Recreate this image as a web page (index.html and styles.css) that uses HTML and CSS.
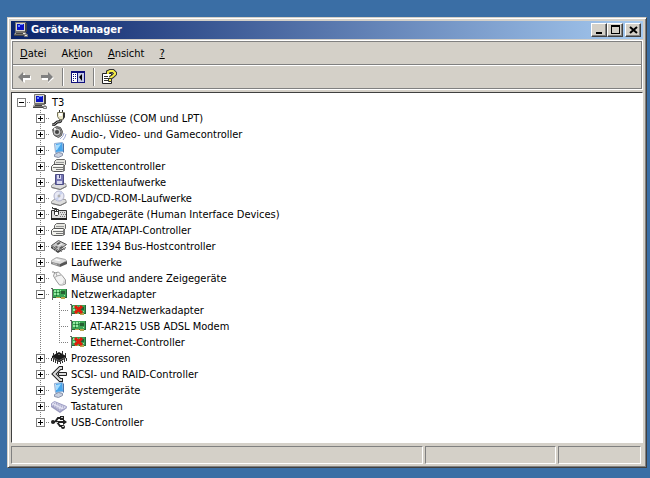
FILE: index.html
```
<!DOCTYPE html>
<html lang="de">
<head>
	<meta charset="UTF-8">
	<title>Geräte-Manager</title>
	<link rel="stylesheet" href="styles.css">
</head>
<body>

<!-- icon sprites, all on a 16x16 grid -->
<svg class="sprites" width="0" height="0">
	<symbol id="pc" viewBox="0 0 16 16">
		<path fill="#d8d6d0" stroke="#77756f" d="M2.500.5h10v9h-10z"/>
		<path fill="#444" d="M12 1h2v9h-2z"/>
		<path fill="#0a12c4" d="M4 2h7v6H4z"/>
		<path fill="#6c8cff" d="M7 2h3v1H7zM5 3h2v2H5z"/>
		<path fill="#e8e6e0" stroke="#77756f" d="M2.500 10.500h10l1 2h-12z"/>
		<path fill="#444" d="M3 11h7v1H3zM1 13h11v1H1z"/>
		<path fill="#e4e4e4" stroke="#777" d="M11.500 12.500h3v2h-3z"/>
	</symbol>
	<symbol id="port" viewBox="0 0 16 16">
		<path fill="none" stroke="#222" stroke-width="3" d="M10 9c0 5-3 1-5 4-1 1-2 2-4 2"/>
		<path fill="none" stroke="#bbb" d="M10 9c0 5-3 1-5 4-1 1-2 2-4 2"/>
		<path fill="#ece8c8" stroke="#77745c" d="M6.500 2.500h7v4l-2 3h-3l-2-3z"/>
		<path fill="#333" d="M12 3h2v4l-2 3zM8 0h1v2H8zM11 0h1v2h-1z"/>
		<path fill="#fff" d="M8 3h3v3H8z"/>
	</symbol>
	<symbol id="audio" viewBox="0 0 16 16">
		<path fill="#999" stroke="#555" d="M1.500 3.500l4-3 4 1 2 4-1 4-3 2-4-2z"/>
		<circle cx="6" cy="6" r="4" fill="#c4c4c4" stroke="#666"/>
		<circle cx="6" cy="6" r="2" fill="#444"/>
		<path fill="#eee" d="M3 2h2v2H3z"/>
		<path fill="none" stroke="#a4acd4" d="M9 13l3-3 1-3M12 14l2-3 1-3"/>
	</symbol>
	<symbol id="monitor" viewBox="0 0 16 16">
		<path fill="#cfdff2" stroke="#8cacd4" d="M3.500 1.500l8-1 1 9-8 1z"/>
		<path fill="#46a5ec" d="M5 2l6-1 1 8-7 1z"/>
		<path fill="#a5dcff" d="M5 3l5-1-4 6H5z"/>
		<path fill="#4d76aa" d="M12 1l1 1v9l-1-1z"/>
		<path fill="#c8d0e0" stroke="#8791a9" d="M3.500 12.500l4-2 4 1v2l-4 2-4-1z"/>
	</symbol>
	<symbol id="controller" viewBox="0 0 16 16">
		<path fill="#e6e6e0" stroke="#666" d="M3.500 3.500l2-2h8l1 1v4l-2 2h-9z"/>
		<path fill="#999" d="M5 4h8v1H5z"/>
		<path fill="#f0f0ea" stroke="#555" d="M.5 8.500l2-2h10l1 2v4l-2 1h-9l-2-1z"/>
		<path fill="#777" d="M2 9h10v1H2zM5 11h7v1H5zM12 8h2v5h-2z"/>
		<path fill="#fff" d="M3 7h9v1H3z"/>
	</symbol>
	<symbol id="floppy" viewBox="0 0 16 16">
		<path fill="#ddd" stroke="#999" d="M.5 11.500l4-3 10 1 1 3-6 3-9-2z"/>
		<path fill="#777" d="M1 13l8 2v1l-8-2zM9 15l6-3v1l-6 3z"/>
		<path fill="#7777b4" stroke="#4d4d85" d="M4.500.5h8v10h-8z"/>
		<path fill="#d8d8f0" d="M6 1h4v4H6zM6 7h5v3H6z"/>
		<path fill="#44447c" d="M8 1h1v3H8z"/>
	</symbol>
	<symbol id="cd" viewBox="0 0 16 16">
		<path fill="#ddd" stroke="#999" d="M.5 11.500l4-3 10 1 1 3-6 3-9-2z"/>
		<path fill="#777" d="M1 13l8 2v1l-8-2zM9 15l6-3v1l-6 3z"/>
		<circle cx="8" cy="6" r="5" fill="#e8e9f4" stroke="#b0b2cb"/>
		<path fill="#c9d2ee" d="M8 6l1-5 3 2zM8 6L4 9l3 2z"/>
		<circle cx="8" cy="6" r="1" fill="#fff" stroke="#999"/>
	</symbol>
	<symbol id="hid" viewBox="0 0 16 16">
		<path fill="#ddd" stroke="#333" d="M.5 4.500h15v8H.5z"/>
		<path fill="#777" d="M9 6h1v1H9zM11 6h1v1h-1zM13 6h1v1h-1zM10 8h1v1h-1zM12 8h1v1h-1zM14 8h1v1h-1zM9 10h1v1H9zM11 10h1v1h-1zM13 10h1v1h-1z"/>
		<path fill="#fff" stroke="#333" d="M3.500 3.500h4v5l-1 1h-2l-1-1z"/>
		<path fill="none" stroke="#333" d="M5.500 6V2.500h-4V1M3 5.500h5"/>
		<path fill="#222" d="M0 12h16v2H0z"/>
	</symbol>
	<symbol id="ieee" viewBox="0 0 16 16">
		<path fill="#444" d="M0 8l7 5 8-4v1l-8 5-7-5z"/>
		<path fill="#c4c4c4" stroke="#555" d="M.5 7.500l7-5 8 4-8 6z"/>
		<path fill="#eee" d="M4 6l4-2 4 2-4 2z"/>
		<path fill="#555" d="M5 8l2 1-1 1-2-1zM11 8l1 1-3 2-1-1zM8 4l2 1-3 2-2-1z"/>
		<path fill="#888" d="M2 10h1v2H2zM4 11h1v2H4zM10 12h1v2h-1zM13 10h1v2h-1z"/>
	</symbol>
	<symbol id="drive" viewBox="0 0 16 16">
		<path fill="#ddd" stroke="#aaa" d="M.5 6.500l5-3 9 2 1 1-6 4-9-2z"/>
		<path fill="#888" d="M0 8l9 2v3l-9-3z"/>
		<path fill="#555" d="M9 10l7-3v3l-7 3z"/>
		<path fill="#bbb" d="M2 9l4 1v1l-4-1z"/>
		<path fill="#fff" d="M5 5l5 1-2 1-5-1z"/>
	</symbol>
	<symbol id="mouse" viewBox="0 0 16 16">
		<path fill="none" stroke="#888" d="M5 4L3 2 1 2"/>
		<path fill="#f3f3f3" stroke="#999" d="M2.500 6l1-3 4-1 4 4 3 4v4l-3 1h-3l-3-4z"/>
		<path fill="none" stroke="#aaa" d="M3 8l3-2 4-1M6 6L5 3"/>
		<path fill="#ccc" d="M13 9l1 4-3 2H9l3-2z"/>
	</symbol>
	<symbol id="net" viewBox="0 0 16 16">
		<path fill="#3ba454" d="M2 3h14v8H2z"/>
		<path fill="#26653a" d="M2 11h14v1H2zM15 3h1v9h-1zM2 4h1v1H2z"/>
		<path fill="#666" d="M0 2h2v1H0zM1 3h1v11H1z"/>
		<path fill="#96e8a2" d="M3 4h2v2H3zM6 4h2v2H6zM3 7h2v2H3zM6 7h2v2H6zM9 4h1v1H9zM13 9h1v1h-1z"/>
		<path fill="#275f32" d="M10 5h4v3h-4zM5 6h1v1H5zM8 6h1v1H8zM5 9h1v1H5z"/>
		<path fill="#b6a54e" d="M5 11h4v1H5zM10 11h4v2h-4z"/>
	</symbol>
	<symbol id="neterr" viewBox="0 0 16 16">
		<use href="#net" width="16" height="16"/>
		<path fill="none" stroke="#e01c0c" stroke-width="3" d="M5 4l7 7M12 4l-7 7"/>
	</symbol>
	<symbol id="cpu" viewBox="0 0 16 16">
		<path fill="#1a1a1a" d="M1 6l7-4 7 4v2l-6 4H8L1 8z"/>
		<path fill="#333" d="M0 8h1v3H0zM2 9h1v3H2zM4 10h1v3H4zM6 11h1v3H6zM9 12h1v2H9zM11 11h1v2h-1zM13 9h1v3h-1zM15 8h1v3h-1zM2 3h1v3H2zM5 1h1v3H5zM11 1h1v3h-1zM14 3h1v3h-1z"/>
		<path fill="#666" d="M7 4h2v1H7zM2 7l6 3 6-3v1l-6 3-6-3z"/>
	</symbol>
	<symbol id="scsi" viewBox="0 0 16 16">
		<path fill="none" stroke="#222" stroke-width="4" d="M12 2H9L3 8l6 6h3"/>
		<path fill="none" stroke="#ddd" stroke-width="2" d="M11 2H9L3 8l6 6h2"/>
		<path fill="#ddd" stroke="#222" d="M7.500 6.500h8v3h-8z"/>
	</symbol>
	<symbol id="keyboard" viewBox="0 0 16 16">
		<path fill="#9c9cc0" d="M0 7l9 6 7-4v1l-7 5-9-6z"/>
		<path fill="#e2e2f2" stroke="#9c9cc4" d="M.5 5.500l3-2 12 5-1 2-5 2-9-5z"/>
		<path fill="none" stroke="#9494bc" stroke-dasharray="1 1" d="M3 5l10 5M2 7l9 5M5 5l9 4"/>
	</symbol>
	<symbol id="usb" viewBox="0 0 16 16">
		<path fill="none" stroke="#222" stroke-width="2" d="M2 8h12M4 8l3-4h3M6 8l3 4h3"/>
		<circle cx="2" cy="8" r="2" fill="#222"/>
		<path fill="#222" d="M12 5l4 3-4 3zM9 2h4v4H9z"/>
		<circle cx="12" cy="13" r="2" fill="#222"/>
		<path fill="#ccc" d="M10 3h2v1h-2zM4 8h3v1H4zM11 12h2v1h-2z"/>
	</symbol>
</svg>

<main class="window">
	<header class="title-bar">
		<svg class="icon"><use href="#pc"/></svg>
		<h1>Geräte-Manager</h1>
		<div class="controls">
			<button aria-label="Minimieren"><svg width="12" height="10"><path d="M3 7h6v2H3z"/></svg></button>
			<button aria-label="Maximieren"><svg width="12" height="10"><path fill-rule="evenodd" d="M2 0h9v9H2zM3 2v6h7V2z"/></svg></button>
			<button class="close" aria-label="Schließen"><svg width="12" height="10"><path fill="none" stroke="#000" stroke-width="2" d="M3 2l7 6M10 2L3 8"/></svg></button>
		</div>
	</header>

	<div class="bars">
		<nav class="menu">
			<button><u>D</u>atei</button>
			<button>Ak<u>t</u>ion</button>
			<button><u>A</u>nsicht</button>
			<button><u>?</u></button>
		</nav>
		<div class="toolbar">
			<button aria-label="Zurück"><svg class="icon"><path fill="#fff" d="M3 9l6-5v3h6v4H9v3z"/><path fill="#808080" d="M2 8l5-5v3h7v3H7v4z"/></svg></button>
			<button aria-label="Vorwärts"><svg class="icon"><path fill="#fff" d="M15 9L9 4v3H3v4h6v3z"/><path fill="#808080" d="M14 8L9 3v3H2v3h7v4z"/></svg></button>
			<span class="separator"></span>
			<button aria-label="Konsolenstruktur"><svg class="icon">
				<path fill="#10107c" d="M1 2h14v12H1z"/>
				<path fill="#fff" d="M2 4h5v9H2z"/>
				<path fill="#c4c8e8" d="M8 4h6v9H8z"/>
				<path fill="#10107c" d="M3 5h1v1H3zM5 5h1v1H5zM3 7h1v1H3zM5 7h1v1H5zM3 9h1v1H3zM5 9h1v1H5zM3 11h1v1H3z"/>
				<path d="M12 5v7L9 8z"/>
			</svg></button>
			<span class="separator"></span>
			<button aria-label="Eigenschaften"><svg class="icon">
				<path fill="#fff" stroke="#222" d="M1.500 4.500h9v10h-9z"/>
				<path fill="#333" d="M3 7h4v1H3zM3 9h6v1H3zM3 11h6v1H3z"/>
				<path fill="none" stroke="#333" stroke-width="4" d="M7 5V3l2-1h3l2 2v1l-2 2-3 2"/>
				<path fill="none" stroke="#f5ec48" stroke-width="2" d="M7 5V3l2-1h3l2 2v1l-2 2-3 2"/>
				<path fill="#f5ec48" stroke="#333" d="M7.500 9.500h3v3h-3z"/>
			</svg></button>
		</div>
	</div>

	<section class="tree">
		<ul class="root">
			<li>
				<div class="row"><button class="toggle open" aria-label="Reduzieren"></button><svg class="icon"><use href="#pc"/></svg><span>T3</span></div>
				<ul>
					<li><div class="row"><button class="toggle" aria-label="Erweitern"></button><svg class="icon"><use href="#port"/></svg><span>Anschlüsse (COM und LPT)</span></div></li>
					<li><div class="row"><button class="toggle" aria-label="Erweitern"></button><svg class="icon"><use href="#audio"/></svg><span>Audio-, Video- und Gamecontroller</span></div></li>
					<li><div class="row"><button class="toggle" aria-label="Erweitern"></button><svg class="icon"><use href="#monitor"/></svg><span>Computer</span></div></li>
					<li><div class="row"><button class="toggle" aria-label="Erweitern"></button><svg class="icon"><use href="#controller"/></svg><span>Diskettencontroller</span></div></li>
					<li><div class="row"><button class="toggle" aria-label="Erweitern"></button><svg class="icon"><use href="#floppy"/></svg><span>Diskettenlaufwerke</span></div></li>
					<li><div class="row"><button class="toggle" aria-label="Erweitern"></button><svg class="icon"><use href="#cd"/></svg><span>DVD/CD-ROM-Laufwerke</span></div></li>
					<li><div class="row"><button class="toggle" aria-label="Erweitern"></button><svg class="icon"><use href="#hid"/></svg><span>Eingabegeräte (Human Interface Devices)</span></div></li>
					<li><div class="row"><button class="toggle" aria-label="Erweitern"></button><svg class="icon"><use href="#controller"/></svg><span>IDE ATA/ATAPI-Controller</span></div></li>
					<li><div class="row"><button class="toggle" aria-label="Erweitern"></button><svg class="icon"><use href="#ieee"/></svg><span>IEEE 1394 Bus-Hostcontroller</span></div></li>
					<li><div class="row"><button class="toggle" aria-label="Erweitern"></button><svg class="icon"><use href="#drive"/></svg><span>Laufwerke</span></div></li>
					<li><div class="row"><button class="toggle" aria-label="Erweitern"></button><svg class="icon"><use href="#mouse"/></svg><span>Mäuse und andere Zeigegeräte</span></div></li>
					<li>
						<div class="row"><button class="toggle open" aria-label="Reduzieren"></button><svg class="icon"><use href="#net"/></svg><span>Netzwerkadapter</span></div>
						<ul>
							<li><div class="row leaf"><svg class="icon"><use href="#neterr"/></svg><span>1394-Netzwerkadapter</span></div></li>
							<li><div class="row leaf"><svg class="icon"><use href="#net"/></svg><span>AT-AR215 USB ADSL Modem</span></div></li>
							<li><div class="row leaf"><svg class="icon"><use href="#neterr"/></svg><span>Ethernet-Controller</span></div></li>
						</ul>
					</li>
					<li><div class="row"><button class="toggle" aria-label="Erweitern"></button><svg class="icon"><use href="#cpu"/></svg><span>Prozessoren</span></div></li>
					<li><div class="row"><button class="toggle" aria-label="Erweitern"></button><svg class="icon"><use href="#scsi"/></svg><span>SCSI- und RAID-Controller</span></div></li>
					<li><div class="row"><button class="toggle" aria-label="Erweitern"></button><svg class="icon"><use href="#monitor"/></svg><span>Systemgeräte</span></div></li>
					<li><div class="row"><button class="toggle" aria-label="Erweitern"></button><svg class="icon"><use href="#keyboard"/></svg><span>Tastaturen</span></div></li>
					<li><div class="row"><button class="toggle" aria-label="Erweitern"></button><svg class="icon"><use href="#usb"/></svg><span>USB-Controller</span></div></li>
				</ul>
			</li>
		</ul>
	</section>

	<footer class="status">
		<div></div>
		<div></div>
		<div></div>
	</footer>
</main>

</body>
</html>
```
FILE: styles.css
```
:root {
	--face: #d4d0c8;
	--shadow: #808080;
	--dark: #404040;
	--desktop: #3a6ea5;
	--line: #808080;
	font-family: Tahoma, "DejaVu Sans Condensed", "DejaVu Sans", sans-serif;
	font-size: 11px;
}
* {
	box-sizing: border-box;
}
body {
	display: flex;
	min-height: 100vh;
	margin: 0;
	padding: 17px 3px 10px 7px;
	background: var(--desktop);
}
button {
	margin: 0;
	padding: 0;
	border: 0;
	background: none;
	color: #000;
	font: inherit;
}
ul {
	margin: 0;
	padding: 0;
	list-style: none;
}
.sprites {
	position: absolute;
}
.icon {
	flex: none;
	display: block;
	width: 16px;
	height: 16px;
}

.window {
	flex: 1;
	display: flex;
	flex-direction: column;
	min-width: 0;
	padding: 3px;
	border: 1px solid;
	border-color: var(--face) var(--dark) var(--dark) var(--face);
	box-shadow: inset 1px 1px #fff, inset -1px -1px var(--shadow);
	background: var(--face);
}

/* title bar */
.title-bar {
	display: flex;
	align-items: center;
	height: 18px;
	padding: 0 2px;
	background: linear-gradient(to right, #0a246a, #a6caf0);
}
.title-bar h1 {
	flex: 1;
	margin: 0 0 0 2px;
	color: #fff;
	font-size: 11px;
	line-height: 16px;
}
.controls {
	display: flex;
}
.controls button {
	width: 16px;
	height: 14px;
	padding: 1px;
	border: 1px solid;
	border-color: #fff var(--dark) var(--dark) #fff;
	box-shadow: inset -1px -1px var(--shadow);
	background: var(--face);
}
.controls svg {
	display: block;
}
.controls .close {
	margin-left: 2px;
}

/* menu and toolbar */
.bars {
	margin-top: 1px;
	padding: 1px;
	border: 1px solid #fff;
	box-shadow: inset 0 0 0 1px var(--shadow);
}
.menu {
	display: flex;
	gap: 1px;
	height: 23px;
	border-bottom: 1px solid var(--shadow);
}
.menu button {
	padding: 0 7px;
}
.toolbar {
	display: flex;
	align-items: center;
	height: 23px;
	border-top: 1px solid #fff;
}
.toolbar button {
	padding: 0 4px 0 3px;
}
.separator {
	width: 2px;
	height: 18px;
	margin: 0 3px;
	border-left: 1px solid var(--shadow);
	border-right: 1px solid #fff;
}

/* tree */
.tree {
	flex: 1;
	margin-top: 2px;
	padding-top: 1px;
	border: 1px solid;
	border-color: var(--dark) #fff #fff var(--dark);
	background: #fff;
}
.tree ul ul {
	padding-left: 19px;
}
.tree li li {
	background: repeating-linear-gradient(var(--line) 0 1px, transparent 1px 2px) 9px 0 / 1px 100% no-repeat;
}
.tree li li:last-child {
	background-size: 1px 8px;
}
.row {
	display: flex;
	align-items: center;
	height: 16px;
	background: repeating-linear-gradient(to right, var(--line) 0 1px, transparent 1px 2px) 9px 8px / 10px 1px no-repeat;
}
.row .icon {
	margin: 0 4px 0 1px;
}
.row.leaf {
	padding-left: 19px;
}
.toggle {
	flex: none;
	width: 9px;
	height: 9px;
	margin: 1px 5px 0;
	border: 1px solid var(--shadow);
	background:
		linear-gradient(#000, #000) center / 5px 1px no-repeat,
		linear-gradient(#000, #000) center / 1px 5px no-repeat,
		#fff;
}
.toggle.open {
	background: linear-gradient(#000, #000) center / 5px 1px no-repeat, #fff;
}

/* status bar */
.status {
	display: grid;
	grid-template-columns: 1fr 131px 83px;
	gap: 2px;
	height: 21px;
	padding: 3px 2px 0 0;
}
.status div {
	border: 1px solid;
	border-color: var(--shadow) #fff #fff var(--shadow);
}
```
